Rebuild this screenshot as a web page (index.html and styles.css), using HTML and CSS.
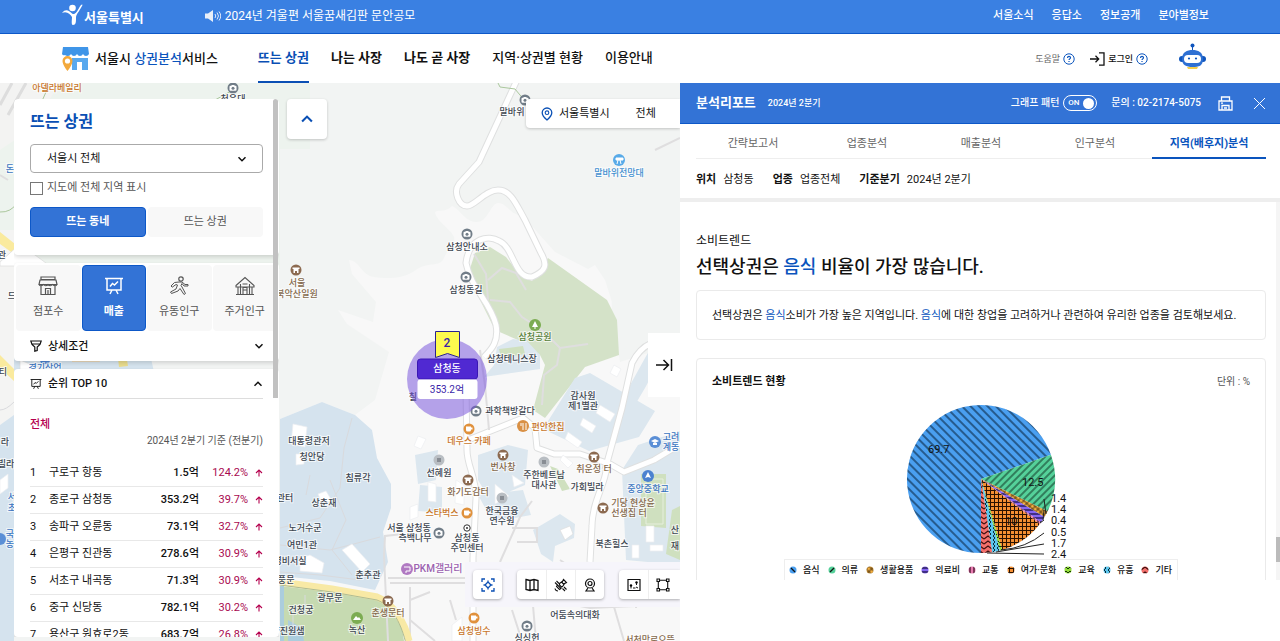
FILE: index.html
```html
<!DOCTYPE html>
<html lang="ko">
<head>
<meta charset="utf-8">
<title>서울시 상권분석서비스</title>
<link rel="stylesheet" href="styles.css">
</head>
<body>
<svg class="defs" aria-hidden="true">
  <defs>
    <symbol id="chev-down" viewBox="0 0 10 10"><path d="M1.5 3.2 5 6.7 8.500 3.200" fill="none" stroke="currentColor" stroke-width="1.500"/></symbol>
    <symbol id="chev-up" viewBox="0 0 10 10"><path d="M1.500 6.800 5 3.300 8.500 6.800" fill="none" stroke="currentColor" stroke-width="1.500"/></symbol>
    <symbol id="help" viewBox="0 0 12 12"><circle cx="6" cy="6" r="5.200" fill="none" stroke="currentColor"/><path d="M4.500 4.900C4.500 2.900 7.500 2.900 7.500 4.800 7.500 5.900 6 5.900 6 7.100M6 8v1" fill="none" stroke="currentColor" stroke-width="1.200"/></symbol>
    <symbol id="arrow-up" viewBox="0 0 8 8"><path d="M4 7.500V1.200M1 4 4 1l3 3" fill="none" stroke="currentColor" stroke-width="1.100"/></symbol>
    <symbol id="board" viewBox="0 0 20 20"><path d="M1 2.500h18M3 2.500v11.500h14V2.500M8 14l-2 4M12 14l2 4M6 10.500l2.500-3 2 1.500L14 5.500" fill="none" stroke="currentColor" stroke-width="1.500"/></symbol>
    <pattern id="p-food" width="6" height="6" patternUnits="userSpaceOnUse" patternTransform="rotate(-45)"><rect width="6" height="6" fill="#4a9ff0"/><path d="M3 0v6" stroke="#08223c" stroke-width="1.100"/></pattern>
    <pattern id="p-cloth" width="5" height="5" patternUnits="userSpaceOnUse" patternTransform="rotate(45)"><rect width="5" height="5" fill="#55d19a"/><path d="M2 0v5" stroke="#0c2c1e" stroke-width="1"/></pattern>
    <pattern id="p-goods" width="4" height="4" patternUnits="userSpaceOnUse" patternTransform="rotate(45)"><rect width="4" height="4" fill="#f5b040"/><path d="M2 0v4M0 2h4" stroke="#33230a" stroke-width=".8"/></pattern>
    <pattern id="p-medic" width="4" height="4" patternUnits="userSpaceOnUse"><rect width="4" height="4" fill="#8465f2"/><path d="M0 2h4" stroke="#140a3c" stroke-width="1.200"/></pattern>
    <pattern id="p-traffic" width="4" height="4" patternUnits="userSpaceOnUse"><rect width="4" height="4" fill="#e87bb0"/><path d="M2 0v4" stroke="#35081d" stroke-width="1.200"/></pattern>
    <pattern id="p-leisure" width="4" height="4" patternUnits="userSpaceOnUse"><rect width="4" height="4" fill="#f58f32"/><path d="M2.500 0v4M0 2.500h4" stroke="#2b1200" stroke-width="1"/></pattern>
    <pattern id="p-edu" width="4" height="4" patternUnits="userSpaceOnUse"><rect width="4" height="4" fill="#93e03a"/><path d="M0 3 2 1l2 2" fill="none" stroke="#19330a"/></pattern>
    <pattern id="p-bar" width="4" height="4" patternUnits="userSpaceOnUse"><rect width="4" height="4" fill="#5bc6ee"/><path d="M1 0l2 2-2 2" fill="none" stroke="#0b2c3a"/></pattern>
    <pattern id="p-etc" width="8" height="5" patternUnits="userSpaceOnUse"><rect width="8" height="5" fill="#f4706c"/><path d="M0 4 4 1l4 3" fill="none" stroke="#401010" stroke-width="1.200"/></pattern>
    <symbol id="cam" viewBox="-6 -6 12 12"><circle r="5.500" fill="#717d88"/><rect x="-3.500" y="-2.200" width="7" height="5" rx="1" fill="#fff"/><path d="M-1.500-3h3v1h-3z" fill="#fff"/><circle cy=".3" r="1.500" fill="#717d88"/></symbol>
    <symbol id="house" viewBox="-6 -6 12 12"><circle r="5.500" fill="#8c6a50"/><path d="M-3.500-2.500h7v1.500h-1v4H1v-2h-2v2h-1.500v-4h-1z" fill="#fff"/></symbol>
    <symbol id="cup" viewBox="-6 -6 12 12"><circle r="5.500" fill="#e0913c"/><path d="M-3-2.500h5v3.500q0 1.500-1.500 1.500h-2Q-3 2.500-3 1zM2-1.500h1.500v2H2" fill="#fff"/></symbol>
  </defs>
</svg>

<div class="topbar">
  <a class="city" href="#">
    <svg width="21" height="22" viewBox="0 0 21 22"><circle cx="10.500" cy="4" r="3.300" fill="#fff"/><path d="M0 9C4 4 7 7 10 9.500 14 12 16 5 19 1c1-1 2-.5 1 1C17 8 14 10 14 14c0 4 0 7-3 7-2 0-1-5-1-8C8 10 5 7 0 9z" fill="#fff"/></svg>
    <span>서울특별시</span>
  </a>
  <a class="notice" href="#">
    <svg width="16" height="12" viewBox="0 0 16 12"><path d="M0 3.500h3L8 0v12L3 8.500H0z" fill="#e8eef8"/><path d="M10 4q1.500 2 0 4M12 2.500q3 3.500 0 7M14 1.500q3.500 4.500 0 9" fill="none" stroke="#dfe9fa"/></svg>
    <span>2024년 겨울편 서울꿈새김판 문안공모</span>
  </a>
  <nav class="toplinks"><a href="#">서울소식</a><a href="#">응답소</a><a href="#">정보공개</a><a href="#">분야별정보</a></nav>
</div>

<header class="header">
  <a class="brand" href="#">
    <svg width="27" height="24" viewBox="0 0 27 24"><path d="M1 0h25l1 7q-1 2-3 2t-3-2q-1 2-3 2t-3-2q-1 2-3 2T9 7Q8 9 6 9T3 8Q1 9 0 7z" fill="#3f95e8"/><path d="M10 11h16v12H20v-8h-5v8H10z" fill="#58a8ee"/><path d="M16 16h3v7h-3z" fill="#fff"/><path d="M5.500 9a5 5 0 0 1 5 5c0 4-5 10-5 10s-5-6-5-10a5 5 0 0 1 5-5z" fill="#f3a93c"/><circle cx="5.500" cy="14" r="2.600" fill="#fff"/></svg>
    <span>서울시 <em>상권분석</em>서비스</span>
  </a>
  <nav class="menu"><a class="on" href="#">뜨는 상권</a><a href="#">나는 사장</a><a href="#">나도 곧 사장</a><a class="thin" href="#">지역·상권별 현황</a><a class="thin" href="#">이용안내</a></nav>
  <div class="tools">
    <a class="tool gray" href="#">도움말 <svg class="q" width="12" height="12"><use href="#help"/></svg></a>
    <a class="tool" href="#"><svg width="15" height="14" viewBox="0 0 15 14"><path d="M0 7h8.500M5.500 3.800 8.700 7 5.500 10.200M9 .8h5v12.400H9" fill="none" stroke="#111" stroke-width="1.300"/></svg>로그인</a>
    <a class="tool only" href="#" aria-label="로그인 도움말"><svg class="q" width="12" height="12"><use href="#help"/></svg></a>
    <a class="robot" href="#" aria-label="챗봇"><svg width="27" height="27" viewBox="0 0 27 27"><circle cx="13.500" cy="2.500" r="2" fill="#0f55bd"/><path d="M13.500 3v5" stroke="#0f55bd"/><path d="M8 24h11l-1 2H9z" fill="#f5cf4d"/><rect x="0" y="13" width="27" height="6" rx="3" fill="#0f55bd"/><path d="M3 16C3 9 8 7 13.500 7S24 9 24 16s-4 8-10.500 8S3 22 3 16z" fill="#2e70d3"/><rect x="5" y="12" width="17" height="8" rx="4" fill="#fff"/><circle cx="10" cy="15.500" r="1.100" fill="#0f55bd"/><circle cx="17" cy="15.500" r="1.100" fill="#0f55bd"/></svg></a>
  </div>
</header>

<main class="main">
<section class="map">
  <svg class="canvas" viewBox="0 83 680 558" preserveAspectRatio="xMinYMin slice" role="img" aria-label="지도">
    <rect y="83" width="680" height="558" fill="#f2f4f3"/>
    <path d="M0 83h310v66H280v120L0 280z" fill="#edf3ee"/>
    <path d="M0 83h60L30 130 0 150z" fill="#f3f3f2"/>
    <path d="M349 260c10 0 12 15 25 17s30 2 42-7 24-2 28-12 12-14 10-21-18-16-19-25c4-3 10 1 17-6 8 3 12 15 24 16s14-18 22-19 14 14 24 12l33 37 33 17 7-4 10 15 7 22 8 60 62-20v299H280V419l42-17 33 13 20-15 14-48-42-28-9-14 35 12 3-20-24-28z" fill="#f8f8f8"/>
    <path d="M0 230h14v411H0z" fill="#f4f4f3"/>
    <path d="M612 330c20 40 30 15 68 10V83h-70z" fill="#f2f4f3"/>
    <path d="M0 425l14-10v226H0zM14 340l90-20v25h44l10 45H14zM280 419l42-17 33 13 17 15 5 28 14 26v24l-8 24 5 30-13 28-45-9-50-5z" fill="#d5e3ee"/>
    <path d="M475 253l15-6 16 10 14 18 12 6 16-23 59 42 10 20 2 35-34 12-40 51-12-8 12-45-5-10-22-15-23-10-15-30-12-25z" fill="#d4e2c8"/>
    <path d="M497 347l16-8 14 2 13 14v14l-56 8 10-12zM575 378l15-5 65 38-16 26-50 14-46-22zM478 455l30-10 20 5-3 35-35 15-12-20zM415 455l23-5-2 30-18 4zM420 485l22 2v26l-24-2zM478 495l45-5 8 25-38 7zM622 470l16-25 42-14v134l-54-5zM533 530l27-16 15 10-1 14-19 8-2 16-12-8zM655 340l25 4v44l-20-28-15 28-13 22-8-14z" fill="#dce7ef"/>
    <path d="M499 349l24-3 2 8-24 4zM641 474h25v54l-25-2zM550 466l8 3 12 20-8 2zM672 510l8-4v54l-14-6z" fill="#cfe0bf"/>
    <path d="M646 479h17v45h-17z" fill="none" stroke="#e6efdd"/>
    <path d="M280 586l60 7 45 8 16 20 3 20H280z" fill="#c6dab1"/>
    <path d="M280 586h4v55h-4zM288 620l14 8 2 13h-16z" fill="#abcddd"/>
    <g fill="none" stroke="#dfe0e0" stroke-width="7" stroke-linejoin="round">
      <path d="M517 80l-38 82-20 22c-6 8 0 22 8 22s18-16 31-16 18 14 27 30l16 33c7 12 5 18-9 24-18 2-18-30-33-36-10-6-30-4-33 22 5 26 24 38 30 62 3 16-4 24-12 32"/>
      <path d="M466 390l1 60c0 16 9 26 9 48l-3 60v83M468 440l55-22 12 10 2 20 17 6 26 0 30 10 14 8 30-12 30-18M590 562l2-36c0-24 14-44 14-56M605 470l17-62 10-45c10-20 25-25 48-23"/>
    </g>
    <g fill="none" stroke="#fff" stroke-width="5" stroke-linejoin="round">
      <path d="M517 80l-38 82-20 22c-6 8 0 22 8 22s18-16 31-16 18 14 27 30l16 33c7 12 5 18-9 24-18 2-18-30-33-36-10-6-30-4-33 22 5 26 24 38 30 62 3 16-4 24-12 32"/>
      <path d="M466 390l1 60c0 16 9 26 9 48l-3 60v83M468 440l55-22 12 10 2 20 17 6 26 0 30 10 14 8 30-12 30-18M590 562l2-36c0-24 14-44 14-56M605 470l17-62 10-45c10-20 25-25 48-23"/>
    </g>
    <g fill="none" stroke="#dfdedf" stroke-width="2">
      <path d="M474 254l12 20 2 26M488 280l14-12 14 5 10 17M490 300l20 2 12 15 20 13 18 18 28-4M560 348l-3 17-13 10-2 30M480 350l5 35 4 45M388 641l-4-85 1-20 18-2M388 578h80M390 583h76M410 587v54M410 620l25 21M410 600l20-8M500 562l20-45 12-16M512 528h25v14h-20M456 620l-6-20M512 610l10 31M530 570l6 71M550 600l40 8 90-4M560 560l30 20M612 600l12 41M640 562l-4 46M655 150l25-12M0 175l8 5"/>
    </g>
    <path d="M0 232l40 32h-12L0 244zM0 355l14 14v12L0 368z" fill="#faea9e"/>
    <path d="M280 582l52 7 45 8c16 6 28 26 32 44" fill="none" stroke="#f8e9a5" stroke-width="7"/>
    <path d="M280 585l52 7 45 8c16 6 25 26 29 44" fill="none" stroke="#aebc94"/>
    <path d="M0 212c30 2 28-60 45-86M30 128L50 83M498 83l2 4 15 2 10 12M215 100l18-10" fill="none" stroke="#aac79c"/>
    <path d="M0 105l12-22M8 115L26 83" stroke="#ddd" stroke-width="3"/>
    <path d="M72 342h20l8 20H72z" fill="#ead8b9"/>
    <path d="M118 358l8-4 2 12-9 1z" fill="#e9dc8d"/>
    <g fill="none" stroke="#d9dadd">
      <path d="M0 410q6 0 14-8M352 418l-8 30-4 40-20 30-40 10M330 480l16 40-14 30 20 25M280 545l50 5 20-5 30-8M280 572l40 3 40 5M293 609v22M305 595v20M310 475l-4 20"/>
    </g>
    <g fill="#fff" stroke="#eceef0" stroke-width=".7">
      <path d="M293 424l14 3-2 20-14-3zM296 454h8v10l-8 1zM342 550l10-6 18 20-8 8zM300 558l10-3 14 8-2 10-22-2zM318 494l8-3 6 10-10 2zM614 365l7 4-4 8-7-4zM418 436l8 3-5 10-7-3zM495 484l14 12-14 8zM512 475l12 8-10 4zM568 432l14 10-4 6-13-9zM583 418l13 8-4 7-12-8zM600 405l15 9-5 8-14-9zM563 455l10 8-5 5-8-8zM646 526h8v16h-8zM632 545h7v13h-7zM650 545h13v6h-13zM456 480l8 5v20l-9-2zM428 482l8 2v18l-8-1zM410 507l8-3v13l-8 3zM452 625l10-8v24h-10zM0 480l8-6v14l-8 6z"/>
    </g>
    <g fill="#fff" stroke="#ddd" stroke-width=".7"><path d="M0 262l20-18 30 22H0zM20 360l20 8-20 8zM560 530l10-4 3 8-8 6z"/></g>

    <use href="#cam" x="227" y="82" width="12" height="12"/><use href="#cam" x="519" y="94" width="12" height="12"/>
    <use href="#cam" x="461" y="228" width="12" height="12"/><use href="#cam" x="460" y="271" width="12" height="12"/>
    <use href="#cam" x="470" y="405" width="12" height="12"/><use href="#cam" x="433" y="527" width="12" height="12"/><use href="#cam" x="521" y="620" width="12" height="12"/>
    <use href="#house" x="290" y="264" width="12" height="12"/><use href="#house" x="497" y="449" width="12" height="12"/><use href="#house" x="462" y="474" width="12" height="12"/><use href="#house" x="588" y="451" width="12" height="12"/><use href="#house" x="597" y="502" width="12" height="12"/><use href="#house" x="382" y="595" width="12" height="12"/>
    <use href="#cup" x="463" y="423" width="12" height="12"/><use href="#cup" x="461" y="507" width="12" height="12"/><use href="#cup" x="468" y="612" width="12" height="12"/>
    <circle cx="523" cy="426" r="6" fill="#d99045"/><path d="M521 423v3M523 423v7M526 423v7" stroke="#fff"/>
    <circle cx="407" cy="569" r="6" fill="#b079c2"/><path d="M404 567h6v4h-4v2" stroke="#fff" fill="none"/>
    <circle cx="619" cy="160" r="6" fill="#58aae8"/><path d="M616 158h7v2h-7zM618 160l-1 4M620 160l1 4" stroke="#fff" fill="#fff"/>
    <circle cx="535" cy="325" r="6" fill="#7cac52"/><path d="M535 321l3 6h-6zM534.500 327h1v2h-1z" fill="#fff"/>
    <circle cx="357" cy="618" r="6" fill="#7cac52"/><path d="M353 620l3-4 2 2 1-1 2 3z" fill="#fff"/>
    <circle cx="655" cy="442" r="6" fill="#5b8fd6"/><path d="M651 441l4-2 4 2-4 2zM653 443v2h4v-2" fill="#fff"/>
    <circle cx="648" cy="476" r="6" fill="#4c82d0"/><path d="M645 478l3-6 3 6-3-1z" fill="#fff"/>
    <circle cx="0" cy="539" r="6" fill="#5b8fd6"/><circle cx="45" cy="358" r="6" fill="#4c82d0"/>
    <g fill="#b9bec3"><circle cx="439" cy="460" r="5.500"/><circle cx="544" cy="462" r="5.500"/><circle cx="502" cy="498" r="5.500"/></g>
    <g fill="#888d94"><rect x="437" y="458" width="4" height="4"/><rect x="542" y="460" width="4" height="4"/><rect x="500" y="496" width="4" height="4"/></g>
    <circle cx="467" cy="528" r="3.200" fill="#fff" stroke="#333"/><circle cx="467" cy="528" r="1" fill="#333"/>

    <g class="labels">
      <text x="57" y="91" class="or">아델라베일리</text><text x="233" y="102">청운대</text><text x="512" y="115">말바위</text>
      <text x="619" y="176" class="sky">말바위전망대</text>
      <text x="297" y="286" class="br">서울</text><text x="297" y="297" class="br">북악산일원</text>
      <text x="467" y="250">삼청안내소</text><text x="466" y="293">삼청동길</text><text x="535" y="340" class="gr">삼청공원</text>
      <text x="512" y="362">삼청테니스장</text><text x="510" y="414">과학책방갈다</text><text x="548" y="430" class="or">편안한집</text>
      <text x="469" y="444" class="or">데우스 카페</text><text x="583" y="399">감사원</text><text x="583" y="409">제1별관</text>
      <text x="309" y="444">대통령관저</text><text x="312" y="460">청안당</text><text x="439" y="476">선혜원</text><text x="503" y="470" class="br">번사창</text>
      <text x="468" y="495" class="br">화기도감터</text><text x="544" y="478">주한베트남</text><text x="544" y="488">대사관</text>
      <text x="594" y="472" class="br">취운정 터</text><text x="587" y="490">가회빌라</text><text x="671" y="440" class="bl">고려</text><text x="671" y="450" class="bl">계동</text>
      <text x="648" y="492" class="bl">중앙중학교</text><text x="633" y="506" class="br">기당 현상윤</text><text x="629" y="516" class="br">선생집 터</text>
      <text x="442" y="516" class="or">스타벅스</text><text x="502" y="514">한국금융</text><text x="502" y="524">연수원</text>
      <text x="409" y="531">서울 삼청동</text><text x="415" y="541">측백나무</text><text x="467" y="541">삼청동</text><text x="467" y="551">주민센터</text>
      <text x="612" y="547">북촌힐스</text><text x="438" y="572" class="pu big">PKM갤러리</text><text x="358" y="481">침류각</text>
      <text x="324" y="506">상춘재</text><text x="285" y="501">관터</text><text x="305" y="531">노거수군</text><text x="302" y="548">여민1관</text>
      <text x="290" y="564">경비서실</text><text x="368" y="578">춘추관</text><text x="282" y="583">춘풍문</text><text x="330" y="601">광무문</text>
      <text x="301" y="613">건청궁</text><text x="388" y="616" class="br">춘생문터</text><text x="357" y="633">녹산</text><text x="288" y="634">향진원샘</text>
      <text x="474" y="634" class="or">삼청빙수</text><text x="527" y="641">싱싱헌</text><text x="575" y="618">어둠속의대화</text><text x="650" y="643" class="br">서천막로으뜸</text>
      <text x="10" y="172" class="bl">돈</text><text x="12" y="299">드</text><text x="2" y="258">관</text><text x="3" y="375">티</text><text x="5" y="445">라</text><text x="6" y="467">빌라</text>
      <text x="12" y="500" class="bl">서</text><text x="12" y="511" class="bl">초</text><text x="10" y="537" class="bl">국</text><text x="10" y="547" class="bl">농</text><text x="45" y="371" class="bl">경기상업</text>
      <text x="413" y="400">칠</text><text x="675" y="533">산</text><text x="675" y="549">재</text>
    </g>
    <g class="marker">
      <circle cx="447" cy="379" r="40" fill="#7450da" fill-opacity=".52"/>
      <path d="M435.500 331.500h24v26l-12-4-12 4z" fill="#fdfa4e" stroke="#2b2190"/>
      <rect x="417.500" y="359" width="60" height="20" rx="3" fill="#5029d2" stroke="#3a17b4"/>
      <rect x="417.500" y="379.500" width="60" height="19.500" rx="3" fill="#fff"/>
      <text class="rank" x="447" y="347">2</text><text class="place" x="447" y="372">삼청동</text><text class="amount" x="447" y="393">353.2억</text>
    </g>
  </svg>

  <aside class="side">
    <div class="thumb"></div>
    <div class="card filter">
      <h1>뜨는 상권</h1>
      <div class="pick"><select aria-label="지역 선택"><option>서울시 전체</option></select><svg width="10" height="10"><use href="#chev-down"/></svg></div>
      <label class="check"><input type="checkbox">지도에 전체 지역 표시</label>
      <div class="pair"><button class="on">뜨는 동네</button><button>뜨는 상권</button></div>
    </div>
    <div class="card">
      <div class="cats">
        <button><svg width="20" height="20" viewBox="0 0 20 20"><path d="M3 1h14v2.500H3zM2 4h16l1 4.500H1zM1 8.500q1.500 2.500 4.500 0 2 2.500 4.500 0 2.500 2.500 4.500 0 3 2.500 4.500 0M3 10v8.500h14V10M7.500 18.500v-6h5v6M10 14v4" fill="none" stroke="currentColor" stroke-width="1.200"/></svg>점포수</button>
        <button class="on"><svg width="20" height="20"><use href="#board"/></svg>매출</button>
        <button><svg width="20" height="20" viewBox="0 0 20 20"><circle cx="12" cy="3" r="2.200" fill="none" stroke="currentColor" stroke-width="1.200"/><path d="M10 6 5.500 6.500 2 10l1.200 1.200L7 8.500l1.500.5L7 13l-5.500 3 1 1.500L9 15l2-2.500 4 6 1.500-1L13 11l-1-1.500 1-2 2 2.500h4V8.500h-3L13 6z" fill="none" stroke="currentColor" stroke-width="1"/></svg>유동인구</button>
        <button><svg width="20" height="20" viewBox="0 0 20 20"><path d="M1 9.500 10 1.500l9 8v1.500h-18zM3 11v7.500M5.500 8v10.500M14.500 8v10.500M17 11v7.500M1 18.500h18M8 18.500v-7h4v7M8 14h4M7.500 8h5" fill="none" stroke="currentColor" stroke-width="1.100"/></svg>주거인구</button>
      </div>
      <button class="fold"><svg width="12" height="12" viewBox="0 0 12 12"><path d="M.8 1h10.400L10 4.500 7.200 7v3.500L4.800 11.200V7L2 4.500zM2 4h8" fill="none" stroke="currentColor" stroke-width="1.200"/></svg><span>상세조건</span><svg width="10" height="10"><use href="#chev-down"/></svg></button>
    </div>
    <div class="card ranks">
      <button class="fold line"><svg width="12" height="12"><use href="#board"/></svg><span>순위 TOP 10</span><svg width="10" height="10"><use href="#chev-up"/></svg></button>
      <h2>전체</h2>
      <p>2024년 2분기 기준 (전분기)</p>
      <table>
        <tr><td>1</td><td>구로구 항동</td><td>1.5억</td><td>124.2%</td><td><svg width="8" height="8"><use href="#arrow-up"/></svg></td></tr>
        <tr><td>2</td><td>종로구 삼청동</td><td>353.2억</td><td>39.7%</td><td><svg width="8" height="8"><use href="#arrow-up"/></svg></td></tr>
        <tr><td>3</td><td>송파구 오륜동</td><td>73.1억</td><td>32.7%</td><td><svg width="8" height="8"><use href="#arrow-up"/></svg></td></tr>
        <tr><td>4</td><td>은평구 진관동</td><td>278.6억</td><td>30.9%</td><td><svg width="8" height="8"><use href="#arrow-up"/></svg></td></tr>
        <tr><td>5</td><td>서초구 내곡동</td><td>71.3억</td><td>30.9%</td><td><svg width="8" height="8"><use href="#arrow-up"/></svg></td></tr>
        <tr><td>6</td><td>중구 신당동</td><td>782.1억</td><td>30.2%</td><td><svg width="8" height="8"><use href="#arrow-up"/></svg></td></tr>
        <tr><td>7</td><td>용산구 원효로2동</td><td>683.7억</td><td>26.8%</td><td><svg width="8" height="8"><use href="#arrow-up"/></svg></td></tr>
      </table>
    </div>
  </aside>

  <button class="toggle-side" aria-label="접기"><svg width="14" height="14"><use href="#chev-up"/></svg></button>
  <div class="crumb">
    <svg width="12" height="14" viewBox="0 0 12 14"><path d="M6 1a4.800 4.800 0 0 1 4.800 4.800C10.800 9 6 13 6 13S1.200 9 1.200 5.800A4.800 4.800 0 0 1 6 1z" fill="none" stroke="#0a50b5" stroke-width="1.300"/><circle cx="6" cy="5.700" r="1.800" fill="none" stroke="#0a50b5" stroke-width="1.100"/></svg>
    <a href="#">서울특별시</a><a href="#">전체</a>
  </div>
  <button class="handle" aria-label="패널 닫기"><svg width="18" height="14" viewBox="0 0 18 14"><path d="M1 7h12.500M8.500 2l5 5-5 5M16.500 1v12" fill="none" stroke="#111" stroke-width="1.500"/></svg></button>
  <div class="mapbar">
    <div class="group"><button aria-label="현재 위치" class="blue"><svg width="14" height="14" viewBox="0 0 14 14"><path d="M1 4V1h3M10 1h3v3M13 10v3h-3M4 13H1v-3M7 4l3 3-3 3-3-3zM7 2.500V4M7 10v1.500M2.500 7H4M10 7h1.500" fill="none" stroke="currentColor" stroke-width="1.300"/></svg></button></div>
    <div class="group">
      <button aria-label="지도"><svg width="14" height="14" viewBox="0 0 14 14"><path d="M1 1.500 5 2.500 9 1.500l4 1v10l-4-1-4 1-4-1zM5 2.500v10M9 1.500v10" fill="none" stroke="currentColor" stroke-width="1.300"/></svg></button>
      <button aria-label="위성"><svg width="14" height="14" viewBox="0 0 14 14"><path d="M9.500 1.500l3 3-3 1.500-1.500-1.500zM5.500 5.500 7.500 4l2.500 2.500-1.500 2-1 .5-2-2zM3.500 7l3.500 3.500-1.500 1L2.500 8.500zM1 4.500 4 7.500M2.500 3 5 5.500M8.500 10.500l2.500 2.500M10 9l2.500 2.500M1 10.500Q1.500 13 4 13" fill="none" stroke="currentColor" stroke-width="1.100"/></svg></button>
      <button aria-label="로드뷰"><svg width="14" height="14" viewBox="0 0 14 14"><circle cx="7" cy="5.500" r="4.500" fill="none" stroke="currentColor" stroke-width="1.200"/><circle cx="7" cy="5.500" r="2" fill="none" stroke="currentColor" stroke-width="1.200"/><path d="M5 10l-2 3h8l-2-3" fill="none" stroke="currentColor" stroke-width="1.200"/></svg></button>
    </div>
    <div class="group cut">
      <button aria-label="주제도"><svg width="14" height="14" viewBox="0 0 14 14"><path d="M1 1.500h12v11H1z" fill="none" stroke="currentColor" stroke-width="1.200"/><circle cx="9.500" cy="4.500" r="1.200"/><circle cx="4" cy="7.500" r="1.200"/><path d="M4 8v2.500M9.500 5v2M6 10h2.500M9 9l2 1" stroke="currentColor" fill="none"/></svg></button>
      <button aria-label="영역"><svg width="14" height="14" viewBox="0 0 14 14"><path d="M1 1h2.500v2.500H1zM10.500 1H13v2.500h-2.500zM1 10.500h2.500V13H1zM10.500 10.500H13V13h-2.500zM3.500 2.300h7M3.500 11.700h7M2.300 3.500v7M11.700 3.500v7" fill="none" stroke="currentColor" stroke-width="1.100"/></svg></button>
    </div>
  </div>
</section>

<section class="report">
  <div class="rhead">
    <h2>분석리포트</h2><span class="term">2024년 2분기</span>
    <label class="switch">그래프 패턴<span class="pill">ON<input type="checkbox" checked></span></label>
    <span class="tel">문의 : 02-2174-5075</span>
    <button aria-label="인쇄"><svg width="15" height="15" viewBox="0 0 15 15"><path d="M3.500 5V1h8v4M1 5h13v9H1zM4 14V9.500h7V14M6 12h3M3 7.200h2" fill="none" stroke="#fff" stroke-width="1.300"/></svg></button>
    <button aria-label="닫기"><svg width="13" height="13" viewBox="0 0 13 13"><path d="M1 1l11 11M12 1 1 12" stroke="#fff"/></svg></button>
  </div>
  <nav class="tabs"><a href="#">간략보고서</a><a href="#">업종분석</a><a href="#">매출분석</a><a href="#">인구분석</a><a class="on" href="#">지역(배후지)분석</a></nav>
  <dl class="info"><dt>위치</dt><dd>삼청동</dd><dt>업종</dt><dd>업종전체</dd><dt>기준분기</dt><dd>2024년 2분기</dd></dl>
  <div class="body">
    <p class="kicker">소비트렌드</p>
    <h3>선택상권은 <em>음식</em> 비율이 가장 많습니다.</h3>
    <p class="note">선택상권은 <em>음식</em>소비가 가장 높은 지역입니다. <em>음식</em>에 대한 창업을 고려하거나 관련하여 유리한 업종을 검토해보세요.</p>
    <div class="chart">
      <div class="chead"><h4>소비트렌드 현황</h4><span>단위 : %</span></div>
      <svg class="pie" width="200" height="162" viewBox="881 397 200 162" role="img" aria-label="소비트렌드 비율">
        <path d="M981 479V553A74 74 0 1 1 1050.900 454.800z" fill="url(#p-food)"/>
        <path d="M981 479 1050.900 454.800A74 74 0 0 1 1047.600 511.300z" fill="url(#p-cloth)"/>
        <path d="M981 479 1047.600 511.300A74 74 0 0 1 1044.500 517z" fill="url(#p-goods)"/>
        <path d="M981 479 1044.500 517A74 74 0 0 1 1040.900 522.500z" fill="url(#p-medic)"/>
        <path d="M981 479 1040.900 522.500A74 74 0 0 1 1039.800 523.900z" fill="url(#p-traffic)"/>
        <path d="M981 479 1039.800 523.900A74 74 0 0 1 1002.100 549.900z" fill="url(#p-leisure)"/>
        <path d="M981 479 1002.100 549.900A74 74 0 0 1 999.900 550.500z" fill="url(#p-edu)"/>
        <path d="M981 479 999.900 550.500A74 74 0 0 1 992.100 552.200z" fill="url(#p-bar)"/>
        <path d="M981 479 992.100 552.200A74 74 0 0 1 981 553z" fill="url(#p-etc)"/>
        <path d="M1046 514l-2-15M1043 520l1-10M1040 523l4-3M1001 550q25-2 43-17M996 552l48-8M987 553l57 1" fill="none" stroke="#222"/>
        <text x="928" y="453">69.7</text><text x="1022" y="486">12.5</text><text x="1005" y="525">10</text>
        <text x="1051" y="502">1.4</text><text x="1051" y="513">1.4</text><text x="1051" y="524">0.4</text><text x="1051" y="536">0.5</text><text x="1051" y="547">1.7</text><text x="1051" y="558">2.4</text>
      </svg>
      <ul class="legend">
        <li><svg width="8" height="8"><circle cx="4" cy="4" r="3.500" fill="#4a9ff0"/><path d="M2 2l4 4" stroke="#111" stroke-width="1.200"/></svg>음식</li>
        <li><svg width="8" height="8"><circle cx="4" cy="4" r="3.500" fill="#55d19a"/><path d="M2 6l4-4" stroke="#111" stroke-width="1.200"/></svg>의류</li>
        <li><svg width="8" height="8"><circle cx="4" cy="4" r="3.500" fill="url(#p-goods)"/></svg>생활용품</li>
        <li><svg width="8" height="8"><circle cx="4" cy="4" r="3.500" fill="url(#p-medic)"/></svg>의료비</li>
        <li><svg width="8" height="8"><circle cx="4" cy="4" r="3.500" fill="url(#p-traffic)"/></svg>교통</li>
        <li><svg width="8" height="8"><circle cx="4" cy="4" r="3.500" fill="url(#p-leisure)"/></svg>여가·문화</li>
        <li><svg width="8" height="8"><circle cx="4" cy="4" r="3.500" fill="url(#p-edu)"/></svg>교육</li>
        <li><svg width="8" height="8"><circle cx="4" cy="4" r="3.500" fill="url(#p-bar)"/></svg>유흥</li>
        <li><svg width="8" height="8"><circle cx="4" cy="4" r="3.500" fill="url(#p-etc)"/></svg>기타</li>
      </ul>
    </div>
    <div class="scroll"></div>
  </div>
</section>
</main>
</body>
</html>
```
FILE: styles.css
```css
* { box-sizing: border-box; margin: 0; padding: 0; }
body {
  height: 100vh;
  display: flex;
  flex-direction: column;
  overflow: hidden;
  background: #fff;
  color: #111;
  font: 11px/16px Roboto, "Noto Sans CJK KR", sans-serif;
  white-space: nowrap;
}
a { color: inherit; text-decoration: none; }
button, select, input { font: inherit; color: inherit; }
button { border: 0; background: none; }
svg { display: block; flex: none; }
em { font-style: normal; color: #0a54bd; }
ul { list-style: none; }
.defs { position: absolute; width: 0; height: 0; }

.topbar {
  display: flex;
  align-items: center;
  height: 34px;
  padding: 0 71px 2px 62px;
  background: #3a80e2;
  border-bottom: 1px solid #0d58c8;
  color: #fff;
}
.city { display: flex; gap: 1px; font-size: 13px; font-weight: 700; align-items: center; padding-bottom: 2px; }
.city span { padding-top: 6px; }
.notice { display: flex; align-items: center; gap: 4px; margin-left: 61px; font-size: 12px; }
.toplinks { display: flex; gap: 18px; margin-left: auto; font-weight: 500; }

.header {
  display: flex;
  height: 49px;
  align-items: center;
  padding: 0 74px 0 62px;
  font-size: 13px;
}
.brand { display: flex; align-items: center; gap: 6px; font-weight: 500; }
.menu { display: flex; gap: 22px; margin-left: 40px; align-self: stretch; font-weight: 700; }
.menu a { line-height: 47px; border-bottom: 2px solid transparent; }
.menu .on { color: #0a4fb4; border-color: #0a4fb4; }
.menu .thin { font-weight: 500; }
.tools { display: flex; align-items: center; margin-left: auto; font-size: 9px; }
.tool { display: flex; align-items: center; gap: 3px; margin-right: 15px; font-weight: 500; }
.gray { color: #666; font-weight: 400; }
.only { margin: 0 31px 0 -12px; }
.q { color: #0a54bd; }
.robot { padding-bottom: 4px; }

.main {
  flex: 1;
  min-height: 0;
  display: grid;
  grid-template: minmax(0, 1fr) / minmax(0, 17fr) minmax(0, 15fr);
}

.map { position: relative; overflow: hidden; background: #f2f4f3; }
.canvas { width: 100%; height: 100%; }
.labels text {
  font-size: 9px;
  font-weight: 500;
  text-anchor: middle;
  fill: #3d4650;
  stroke: #fff;
  stroke-width: 2px;
  stroke-opacity: .7;
  paint-order: stroke;
}
.labels .big { font-size: 10px; }
.labels .or { fill: #c8762a; }
.labels .br { fill: #85694c; }
.labels .gr { fill: #55803a; }
.labels .bl { fill: #3a74c0; }
.labels .sky { fill: #4390d0; }
.labels .pu { fill: #9b62b0; }
.marker text { text-anchor: middle; font-size: 10px; fill: #3a1ea8; }
.marker .rank { font-size: 12px; font-weight: 500; }
.marker .place { fill: #fff; font-weight: 500; }

.side {
  position: absolute;
  top: 16px;
  left: 14px;
  bottom: 4px;
  width: 265px;
  display: flex;
  flex-direction: column;
  gap: 8px;
  overflow: hidden;
  border-radius: 4px 4px 0 0;
}
.thumb { position: absolute; z-index: 2; right: 1px; top: 0; width: 5px; height: 299px; border-radius: 3px 3px 0 0; background: #c1c1c1; }
.card { flex: none; background: #fff; border-radius: 4px; box-shadow: 0 2px 4px rgba(0, 0, 0, .14); }
.filter { padding: 11px 16px 18px; }
.filter h1 { font-size: 16px; line-height: 24px; font-weight: 700; color: #0a4fb4; }
.pick { position: relative; margin-top: 10px; }
.pick select {
  display: block;
  width: 100%;
  height: 29px;
  padding: 1px 16px 0;
  appearance: none;
  border: 1px solid #aaa;
  border-radius: 4px;
  background: #fff;
}
.pick svg { position: absolute; right: 16px; top: 10px; }
.check { display: flex; align-items: center; gap: 4px; margin-top: 7px; color: #555; }
.check input { appearance: none; width: 13px; height: 13px; border: 1px solid #777; background: #fff; }
.pair { display: grid; grid-template-columns: 1fr 1fr; gap: 2px; margin-top: 11px; }
.pair button { height: 30px; background: #f8f8f8; border-radius: 4px; color: #555; }
.pair .on, .cats .on { background: #3373d6; border: 1px solid #0d58c8; color: #fff; font-weight: 700; }
.cats { display: grid; grid-template-columns: repeat(4, 1fr); gap: 1px; padding: 2px 2px 0; }
.cats button {
  display: flex;
  flex-direction: column;
  align-items: center;
  justify-content: center;
  gap: 8px;
  height: 66px;
  background: #f8f8f8;
  border-radius: 4px;
  color: #555;
}
.fold { display: flex; align-items: center; gap: 6px; width: 100%; height: 30px; padding: 0 15px 0 16px; font-weight: 500; }
.fold span { flex: 1; padding-top: 1px; text-align: left; }
.ranks { padding: 0 16px; flex: 1; min-height: 0; }
.ranks .fold { padding: 0; border-bottom: 1px solid #ddd; }
.ranks h2 { margin-top: 18px; font-size: 11px; font-weight: 500; color: #b5004e; }
.ranks p { font-size: 10px; text-align: right; color: #555; }
.ranks table { width: 100%; margin-top: 10px; border-collapse: collapse; table-layout: fixed; }
.ranks tr { height: 27px; border-bottom: 1px solid #e8e8e8; }
.ranks td { padding-top: 1px; }
.ranks td:nth-child(1) { width: 19px; }
.ranks td:nth-child(3) { width: 60px; text-align: right; font-weight: 500; }
.ranks td:nth-child(4) { width: 49px; text-align: right; color: #a8094f; }
.ranks td:nth-child(5) { width: 15px; color: #b5004e; }
.ranks td svg { margin-left: auto; }

.toggle-side, .group button { display: flex; align-items: center; justify-content: center; }
.toggle-side {
  position: absolute;
  top: 16px;
  left: 287px;
  width: 40px;
  height: 40px;
  border-radius: 4px;
  background: #fff;
  color: #0a4fb4;
  box-shadow: 0 1px 3px rgba(0, 0, 0, .2);
}
.crumb {
  position: absolute;
  top: 16px;
  right: 0;
  display: flex;
  align-items: center;
  width: 154px;
  height: 29px;
  padding-left: 15px;
  border-radius: 4px 0 0 4px;
  background: #fff;
  box-shadow: 0 1px 3px rgba(0, 0, 0, .2);
}
.crumb a { margin-left: 6px; }
.crumb a + a { margin-left: 26px; }
.handle { position: absolute; top: 250px; right: 0; width: 32px; height: 64px; padding-left: 7px; background: #fff; }
.mapbar { position: absolute; right: 0; bottom: 34px; display: flex; gap: 15px; padding: 8px 0 8px 8px; background: #f6f5fb; }
.group { display: flex; background: #fff; border-radius: 4px; box-shadow: 0 1px 3px rgba(0, 0, 0, .3); }
.group button { width: 29px; height: 29px; }
.group button + button { border-left: 1px solid #eee; }
.blue { color: #0a4fb4; }
.cut { padding-right: 3px; border-radius: 4px 0 0 4px; }

.report { display: flex; flex-direction: column; padding-bottom: 61px; background: #fff; }
.rhead {
  display: flex;
  align-items: center;
  height: 41px;
  padding: 0 14px 0 16px;
  background: #3373d6;
  border-bottom: 1px solid #0d58c8;
  color: #fff;
  font-size: 10px;
}
.rhead h2 { font-size: 13px; font-weight: 700; }
.term { margin-left: 12px; font-size: 9px; font-weight: 500; }
.switch { display: flex; align-items: center; gap: 4px; margin-left: auto; font-weight: 500; }
.pill { display: flex; align-items: center; justify-content: space-between; width: 34px; height: 16px; padding: 0 2px 0 4px; border: 1px solid #fff; border-radius: 8px; font-size: 8px; }
.pill input { appearance: none; width: 11px; height: 11px; border-radius: 50%; background: #fff; }
.tel { margin-left: 14px; font-weight: 500; }
.rhead button { margin-left: 17px; }
.rhead button + button { margin-left: 20px; }
.tabs { display: flex; margin: 0 14px 0 16px; border-bottom: 1px solid #eee; }
.tabs a { flex: 1; height: 35px; margin-bottom: -1px; line-height: 40px; text-align: center; color: #666; }
.tabs .on { color: #0a54bd; font-weight: 700; border-bottom: 2px solid #0a54bd; }
.info { display: flex; padding: 13px 16px 10px; border-bottom: 4px solid #eee; }
.info dt { font-weight: 700; }
.info dd { margin: 0 19px 0 7px; }
.body { position: relative; flex: 1; min-height: 0; overflow: hidden; padding: 31px 14px 0 16px; }
.kicker { font-size: 12px; }
.body h3 { margin-top: 6px; font-size: 18px; line-height: 24px; font-weight: 500; }
.body h3 em { color: #0a54bd; }
.note { margin-top: 11px; padding: 17px 15px 15px; border: 1px solid #eaeaea; border-radius: 4px; }
.chart { margin-top: 18px; padding: 15px 15px 14px; border: 1px solid #eaeaea; border-radius: 4px; }
.chead { display: flex; justify-content: space-between; font-size: 10px; color: #555; }
.chead h4 { font-size: 11px; font-weight: 700; color: #111; }
.pie { margin: 7px auto 0; }
.pie text { font-size: 11px; fill: #111; }
.legend { display: flex; justify-content: center; gap: 8px; width: max-content; margin: 0 auto; padding: 2px 5px 5px 4px; border: 1px solid #eee; font-size: 9px; font-weight: 500; }
.legend li { display: flex; align-items: center; gap: 6px; }
.scroll { position: absolute; right: 0; top: 0; bottom: 0; width: 4px; background: linear-gradient(#bbb, #bbb) 0 95% / 4px 25px no-repeat #f5f5f5; }
```
